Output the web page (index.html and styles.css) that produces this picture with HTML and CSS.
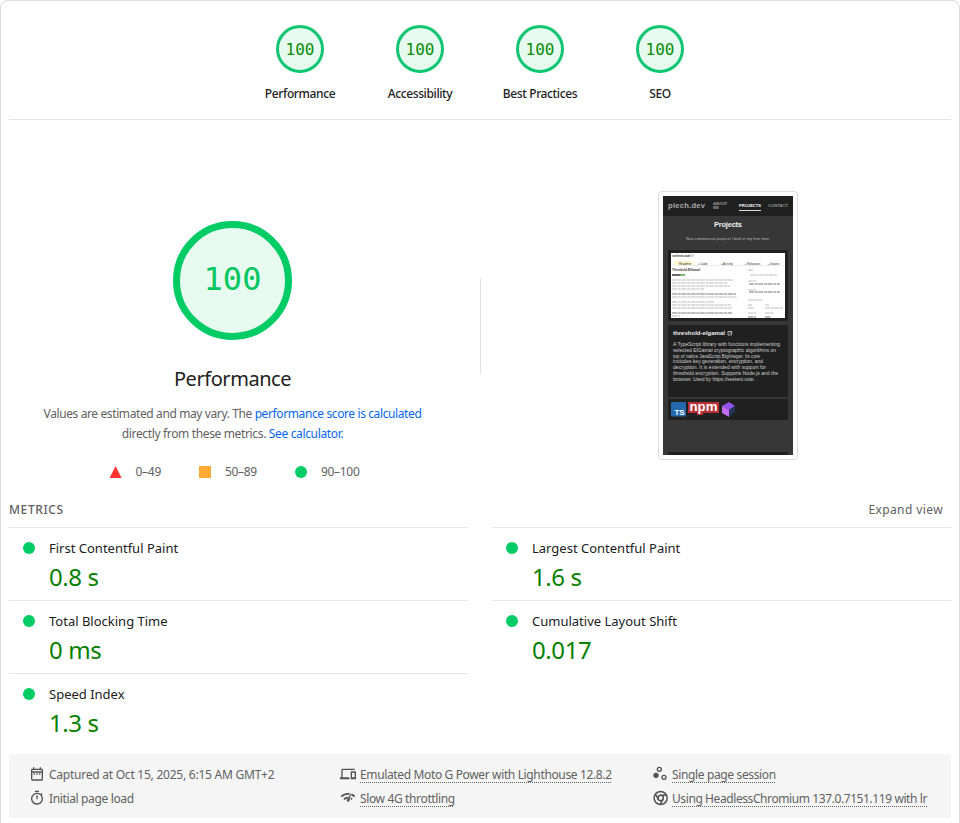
FILE: index.html
```
<!DOCTYPE html>
<html lang="en">
<head>
<meta charset="utf-8">
<title>Lighthouse report</title>
<link rel="stylesheet" href="styles.css">
</head>
<body>
<main class="report">
  <header class="scores">
    <a class="score"><span class="gauge">100</span><span class="score-label">Performance</span></a>
    <a class="score"><span class="gauge">100</span><span class="score-label">Accessibility</span></a>
    <a class="score"><span class="gauge">100</span><span class="score-label">Best Practices</span></a>
    <a class="score"><span class="gauge">100</span><span class="score-label">SEO</span></a>
  </header>

  <section class="summary">
    <div class="summary-score">
      <div class="gauge gauge-large">100</div>
      <h1>Performance</h1>
      <p class="note">Values are estimated and may vary. The <a>performance score is calculated</a><br><span class="loose">directly from these metrics. <a>See calculator.</a></span></p>
      <div class="scale">
        <span class="range"><i class="mark fail"></i>0–49</span>
        <span class="range"><i class="mark average"></i>50–89</span>
        <span class="range"><i class="mark pass"></i>90–100</span>
      </div>
    </div>
    <div class="summary-shot">
      <div class="shot">
        <svg width="130" height="259" viewBox="0 0 130 259" font-family="Liberation Sans, sans-serif">
          <rect width="130" height="259" fill="#373737"/>
          <rect width="130" height="20" fill="#202020"/>
          <text x="5" y="12" font-size="7.600" font-weight="bold" fill="#aaa" textLength="37">piech.dev</text>
          <g font-size="4" font-weight="bold" fill="#999">
            <text x="50" y="8.500">ABOUT</text><text x="50" y="13">ME</text>
            <text x="76" y="11" fill="#fff" textLength="22">PROJECTS</text>
            <text x="105" y="11" textLength="20">CONTACT</text>
          </g>
          <path d="M76 14.500h22" stroke="#ddd"/>
          <text x="65" y="31" font-size="7.500" font-weight="bold" fill="#eee" text-anchor="middle" textLength="28">Projects</text>
          <text x="65" y="44" font-size="4" fill="#bbb" text-anchor="middle" textLength="84">Non-commercial projects I built in my free time.</text>
          <rect x="5" y="54" width="120" height="71" fill="#202020"/>
          <rect x="8" y="57" width="114" height="65" fill="#fff"/>
          <g font-size="3.200" fill="#333">
            <text x="9" y="61" font-weight="bold">seelent-vote ☰</text>
            <rect x="11" y="65" width="19" height="4" fill="#fbf7ca"/>
            <text x="16" y="68.500">Readme</text><text x="35" y="68.500">▪ Code</text><text x="58" y="68.500">▪ Activity</text><text x="82" y="68.500">▪ Releases</text><text x="105" y="68.500">▪ Issues</text>
            <text x="9" y="75" font-size="4.200" font-weight="bold" textLength="28" lengthAdjust="spacingAndGlyphs">Threshold ElGamal</text>
          </g>
          <path d="M9 79h8" stroke="#444" stroke-width="1.600"/><path d="M17 79h5" stroke="#57a944" stroke-width="1.600"/>
          <path d="M8 69.500h114" stroke="#ddd" stroke-width=".5"/>
          <g stroke="#aaa" stroke-width=".8" stroke-dasharray="5 .7 3 .6">
            <path d="M9 84h61M9 87h55M9 90h58M9 93h32M9 101h65M9 106h43M9 109h59M9 112h60M9 120h8"/>
            <path stroke="#555" d="M9 98h64M9 117h60"/>
            <path d="M85 74h5M87 79h27M85 85h8M85 94h8M85 104h14M85 109h4M102 109h4M85 112h6M102 112h18M85 117h8M102 117h9"/>
            <path stroke="#555" d="M86 88h31M86 96h31M85 121h8M102 121h6"/>
          </g>
          <rect x="5" y="129" width="120" height="72" fill="#202020"/>
          <text x="10" y="139" font-size="6" font-weight="bold" fill="#eee" textLength="52">threshold-elgamal</text>
          <path d="M67 135.500h-2v3.500h3.500v-2M66.500 137.500l2-2m-1.700 0h2v2" fill="none" stroke="#ddd" stroke-width=".7"/>
          <g font-size="5" fill="#d0d0d0">
            <text x="10" y="150" textLength="107">A TypeScript library with functions implementing</text>
            <text x="10" y="155.800" textLength="103">selected ElGamal cryptographic algorithms on</text>
            <text x="10" y="161.600" textLength="87" lengthAdjust="spacingAndGlyphs">top of native JavaScript BigInteger. Its core</text>
            <text x="10" y="167.400" textLength="90">includes key generation, encryption, and</text>
            <text x="10" y="173.200" textLength="93">decryption. It is extended with support for</text>
            <text x="10" y="179" textLength="105">threshold encryption. Supports Node.js and the</text>
            <text x="10" y="184.800" textLength="82">browser. Used by https://seelent.vote.</text>
          </g>
          <rect x="5" y="203" width="120" height="21" fill="#202020"/>
          <rect x="8" y="206" width="15" height="14.500" rx="1" fill="#2469ad"/>
          <text x="11.500" y="219" font-size="8" font-weight="bold" fill="#fff" textLength="10">TS</text>
          <path d="M25 206h31v11H40v2h-6v-2h-9z" fill="#b93038"/>
          <text x="26.500" y="215" font-size="12" font-weight="bold" fill="#fff" textLength="28" lengthAdjust="spacingAndGlyphs">npm</text>
          <path d="M59 210l7-4 6 4-6 4z" fill="#9053ed"/><path d="M59 210l7 4v7l-7-4z" fill="#c46bf2"/><path d="M66 214l6-4v5l-6 6z" fill="#26345a"/>
          <rect x="5" y="256" width="120" height="3" fill="#202020"/>
        </svg>
      </div>
    </div>
  </section>

  <div class="metrics-head"><span class="metrics-title">METRICS</span><span class="expand">Expand view</span></div>
  <section class="metrics">
    <div class="metric"><i class="mark pass"></i><div><div class="name">First Contentful Paint</div><div class="value">0.8 s</div></div></div>
    <div class="metric"><i class="mark pass"></i><div><div class="name">Largest Contentful Paint</div><div class="value">1.6 s</div></div></div>
    <div class="metric"><i class="mark pass"></i><div><div class="name">Total Blocking Time</div><div class="value">0 ms</div></div></div>
    <div class="metric"><i class="mark pass"></i><div><div class="name">Cumulative Layout Shift</div><div class="value">0.017</div></div></div>
    <div class="metric"><i class="mark pass"></i><div><div class="name">Speed Index</div><div class="value">1.3 s</div></div></div>
  </section>

  <footer class="meta">
    <div class="meta-col">
      <div class="meta-item captured"><svg viewBox="0 0 24 24"><path d="M7 11h2v2H7zm14-5v14c0 1.100-.9 2-2 2H5a2 2 0 0 1-2-2V6c0-1.100.9-2 2-2h1V2h2v2h8V2h2v2h1c1.100 0 2 .9 2 2M5 8h14V6H5zm14 12V10H5v10zm-4-7h2v-2h-2zm-4 0h2v-2h-2z"/></svg><span>Captured at Oct 15, 2025, 6:15 AM GMT+2</span></div>
      <div class="meta-item"><svg viewBox="0 0 24 24"><path d="M15 1H9v2h6zm-4 13h2V8h-2zm8.030-6.610 1.420-1.420c-.43-.51-.9-.99-1.410-1.410l-1.420 1.420A9 9 0 1 0 19.030 7.390zM12 20a7 7 0 1 1 0-14 7 7 0 0 1 0 14z"/></svg><span>Initial page load</span></div>
    </div>
    <div class="meta-col">
      <div class="meta-item"><svg viewBox="0 0 24 24"><path d="M4 6h18V4H4a2 2 0 0 0-2 2v11H0v3h14v-3H4zm19 2h-6a1 1 0 0 0-1 1v10c0 .55.45 1 1 1h6c.55 0 1-.45 1-1V9c0-.55-.45-1-1-1zm-1 9h-4v-7h4z"/></svg><span class="link">Emulated Moto G Power with Lighthouse 12.8.2</span></div>
      <div class="meta-item"><svg viewBox="0 0 24 24"><path d="m15.900 5-.17.200-5.120 9.300-.18.300a2 2 0 1 0 3.700 1.500l.07-.2L16.500 5.300A.3.300 0 0 0 15.900 5M1 9l2 2c2.880-2.880 6.790-4.080 10.530-3.620l1.190-2.680C9.890 3.840 4.740 5.270 1 9m20 2 2-2c-1.640-1.640-3.550-2.820-5.590-3.570l-.53 2.820A13 13 0 0 1 21 11m-4 4 2-2c-.8-.8-1.700-1.420-2.660-1.890l-.55 2.920q.63.390 1.210.97M5 13l2 2a7 7 0 0 1 4.030-1.970l1.280-2.880A10 10 0 0 0 5 13"/></svg><span class="link">Slow 4G throttling</span></div>
    </div>
    <div class="meta-col">
      <div class="meta-item"><svg viewBox="0 0 24 24"><circle cx="6" cy="14" r="4"/><path d="M11 1a4 4 0 1 0 0 8 4 4 0 0 0 0-8m0 6a2 2 0 1 1 0-4 2 2 0 0 1 0 4m7 6a4 4 0 1 0 0 8 4 4 0 0 0 0-8m0 6a2 2 0 1 1 0-4 2 2 0 0 1 0 4"/></svg><span class="link">Single page session</span></div>
      <div class="meta-item chrome"><svg viewBox="0 0 24 24"><g fill="none" stroke="#515151" stroke-width="2.200"><circle cx="13" cy="12" r="9.800"/><circle cx="13" cy="12" r="4"/><path d="M13 8h9M9.500 14 5 6.200M16.500 14l-4.500 7.800"/></g></svg><span class="link">Using HeadlessChromium 137.0.7151.119 with lr</span></div>
    </div>
  </footer>
</main>
</body>
</html>
```
FILE: styles.css
```
* { box-sizing: border-box; }
body {
  margin: 0;
  height: 823px;
  overflow: hidden;
  background: #fff;
  color: #212121;
  font-family: "Noto Sans", sans-serif;
  font-size: 12px;
}
.report {
  height: 840px;
  padding: 0 8px;
  border: 1px solid #dadada;
  border-radius: 8px;
}
.scores {
  display: flex;
  justify-content: center;
  height: 119px;
  padding-top: 24px;
  border-bottom: 1px solid #e3e3e3;
}
.score {
  display: flex;
  flex-direction: column;
  align-items: center;
  width: 120px;
}
.gauge {
  display: flex;
  align-items: center;
  justify-content: center;
  width: 48px;
  height: 48px;
  padding-top: 2px;
  border: 3px solid #10c670;
  border-radius: 50%;
  background: #e6faef;
  color: #078c09;
  font: 16px/1 "DejaVu Sans Mono", monospace;
}
.score-label {
  margin-top: 12px;
  line-height: 18px;
  font-weight: 500;
  letter-spacing: -.38px;
  white-space: nowrap;
}
.summary {
  display: grid;
  grid-template-columns: 471px 471px;
  height: 374px;
  padding-top: 71px;
}
.summary-score {
  display: flex;
  flex-direction: column;
  align-items: center;
  padding: 30px 24px 0 0;
}
.gauge-large {
  width: 119px;
  height: 119px;
  padding: 0 0 4px;
  border: 7px solid #00cc66;
  color: #00c65f;
  font-size: 32px;
}
h1 {
  margin: 26px 0 0;
  font-size: 20px;
  font-weight: 400;
  line-height: 26px;
  letter-spacing: -.45px;
}
.note {
  margin: 12px 0 0;
  color: #616161;
  line-height: 20px;
  letter-spacing: -.39px;
  text-align: center;
  white-space: nowrap;
}
.note a { color: #0668f0; }
.loose { letter-spacing: -.35px; }
.scale {
  display: flex;
  gap: 38px;
  margin: 19px 0 0 4px;
  color: #616161;
  line-height: 18px;
  letter-spacing: -.3px;
}
.range { display: flex; align-items: center; }
.range .mark { margin-right: 14px; }
.mark {
  display: block;
  flex: none;
  width: 12px;
  height: 12px;
}
.pass { border-radius: 50%; background: #00cc66; }
.average { background: #ffaa33; }
.fail { background: #ff3333; clip-path: polygon(50% 0, 100% 100%, 0 100%); }
.summary-shot {
  display: flex;
  align-items: flex-start;
  justify-content: center;
  padding-left: 25px;
  background: linear-gradient(#e3e3e3, #e3e3e3) 0 87px / 1px 96px no-repeat;
}
.shot {
  height: 269px;
  padding: 4px;
  border: 1px solid #ddd;
  border-radius: 4px;
}
.shot svg { display: block; }
.metrics-head {
  display: flex;
  justify-content: space-between;
  height: 33px;
  padding: 7px 8px 0 0;
  color: #616161;
  line-height: 18px;
}
.metrics-title { font-weight: 500; letter-spacing: .6px; }
.expand { letter-spacing: .4px; }
.metrics {
  display: grid;
  grid-template-columns: 1fr 1fr;
  grid-auto-rows: 73px;
  column-gap: 24px;
  height: 227px;
}
.metric {
  display: flex;
  gap: 14px;
  padding: 10px 14px 0;
  border-top: 1px solid #e6e6e6;
}
.metric .mark { margin-top: 4px; }
.name { font-size: 13px; line-height: 20px; }
.value {
  margin-top: 3px;
  color: #078000;
  font-size: 24px;
  line-height: 32px;
  letter-spacing: -.4px;
}
.meta {
  display: grid;
  grid-template-columns: 311px 312px 1fr;
  height: 64px;
  padding: 8px 0 0 20px;
  background: #f5f5f5;
  color: #616161;
}
.meta-item {
  display: flex;
  align-items: center;
  height: 24px;
  letter-spacing: -.36px;
  white-space: nowrap;
}
.captured { letter-spacing: -.24px; }
.chrome { letter-spacing: -.41px; }
.meta-item svg {
  width: 16px;
  height: 16px;
  margin-right: 4px;
  fill: #515151;
}
.link {
  text-decoration: underline dotted 1px;
  text-underline-offset: 3px;
}
```
